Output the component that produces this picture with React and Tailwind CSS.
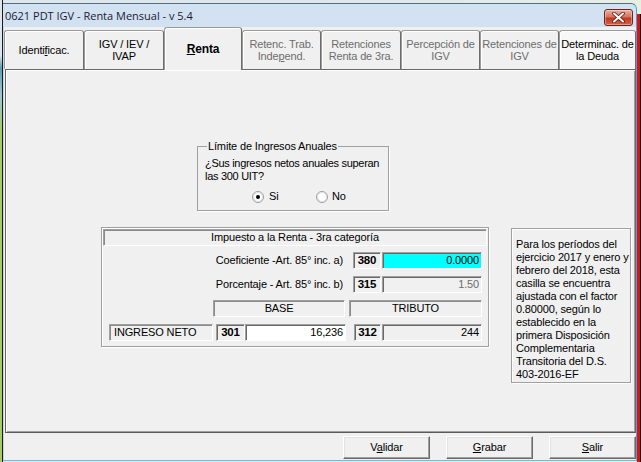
import React from "react";

const sunken =
  "border border-t-[#a0a0a0] border-l-[#a0a0a0] border-b-white border-r-white shadow-[inset_1px_1px_0_#696969]";
const sunkenLight =
  "border border-t-[#a0a0a0] border-l-[#a0a0a0] border-b-white border-r-white shadow-[inset_1px_1px_0_#8a8a8a]";

function Tab({ w, selected, disabled, light, children }) {
  const base =
    "flex items-center justify-center text-center rounded-t-[3px] border border-b-0 border-[#9a9a9a] border-r-[#6d6d6d] shadow-[inset_1px_1px_0_#ffffff]";
  if (selected) {
    return (
      <div
        className={`${base} relative z-10 h-[43px] -mb-[1px] bg-[#f0f0f0] font-bold text-[12px] text-black`}
        style={{ width: w }}
      >
        {children}
      </div>
    );
  }
  return (
    <div
      className={`${base} h-[39px] ${light ? "bg-[#f7f7f7]" : "bg-[#f0f0f0]"} ${
        disabled ? "text-[#6d6d6d]" : "text-black"
      }`}
      style={{ width: w }}
    >
      <div className="leading-[12px]">{children}</div>
    </div>
  );
}

function Radio({ checked }) {
  return (
    <svg width="12" height="12" viewBox="0 0 12 12">
      <circle cx="6" cy="6" r="5.5" fill="#ffffff" stroke="#9b9b9b" />
      <circle cx="6" cy="6" r="4.5" fill="none" stroke="#dcdcdc" />
      {checked && <circle cx="6" cy="6" r="2" fill="#000000" />}
    </svg>
  );
}

function Btn({ children }) {
  return (
    <div className="w-[87px] h-[23px] flex items-center justify-center bg-[#f0f0f0] border border-t-white border-l-white border-b-[#696969] border-r-[#696969] shadow-[inset_-1px_-1px_0_#a0a0a0,inset_1px_1px_0_#e3e3e3] text-black">
      <span>{children}</span>
    </div>
  );
}

export default function App() {
  return (
    <div className="w-[641px] h-[462px] overflow-hidden flex bg-[linear-gradient(to_right,#dfe7ec_0%,#dfe7ec_50%,#e7f0df_100%)] font-['Liberation_Sans',Arial,sans-serif] text-[11px] leading-[13px] tracking-[-0.15px] text-black">
      {/* left desktop strip */}
      <div className="w-[3px] h-full shrink-0 bg-[linear-gradient(to_bottom,#dde6ec_0px,#dde6ec_55px,#5d9fb2_68px,#a0c8cc_95px,#a7cb6b_130px,#a7cb6b_100%)] border-r border-[#1b1b1b]" />
      {/* window */}
      <div className="mt-[3px] w-[634px] h-[458px] shrink-0 flex flex-col border border-l-0 border-t-[#4f6f8d] border-r-[#3fa9db] border-b-[#5ac3e6] rounded-tr-[6px] bg-[linear-gradient(to_bottom,#d3e2f1,#b6cce6)] overflow-hidden">
        {/* title bar */}
        <div className="h-[23px] shrink-0 flex items-start justify-between">
          <div className="pl-[2px] leading-[23px] text-[11px] tracking-normal font-['Open_Sans',sans-serif] text-[#1a1a33]">
            0621 PDT IGV - Renta Mensual - v 5.4
          </div>
          <div className="mt-[5px] mr-[3px] w-[29px] h-[17px] rounded-[3px] border border-[#6e2418] bg-[linear-gradient(to_bottom,#eab0a2_0%,#d9735f_45%,#c0391f_55%,#d0644c_100%)] flex items-center justify-center shadow-[inset_0_0_0_1px_rgba(255,255,255,0.35)]">
            <svg width="13" height="11" viewBox="0 0 13 11">
              <path d="M2 1.5 L11 9.5 M11 1.5 L2 9.5" stroke="#5a1a10" strokeWidth="3.6" strokeLinecap="round" />
              <path d="M2 1.5 L11 9.5 M11 1.5 L2 9.5" stroke="#ffffff" strokeWidth="2" strokeLinecap="round" />
            </svg>
          </div>
        </div>
        {/* client */}
        <div className="flex-1 bg-[#f0f0f0] flex flex-col border-l border-[#c8d6e4]">
          {/* tabs */}
          <div className="flex items-end h-[42px] shrink-0">
            <Tab w={80}>
              Identi<span className="underline underline-offset-[1px]">f</span>icac.
            </Tab>
            <Tab w={80}>
              IGV / IEV /<br />IVAP
            </Tab>
            <Tab w={78} selected>
              <span>
                <span className="underline underline-offset-[1px]">R</span>enta
              </span>
            </Tab>
            <Tab w={79} disabled>
              Retenc. Trab.<br />Inde<span className="underline underline-offset-[1px]">p</span>end.
            </Tab>
            <Tab w={80} disabled>
              Retenciones<br />Renta de 3ra.
            </Tab>
            <Tab w={79} disabled>
              Percepción de<br />IGV
            </Tab>
            <Tab w={79} disabled>
              Retenciones de<br />IGV
            </Tab>
            <Tab w={77} light>
              Determinac. de<br />la Deuda
            </Tab>
          </div>
          {/* panel */}
          <div className="ml-[1px] w-[631px] h-[364px] shrink-0 border border-[#696969] border-b-[#5a5a5a] shadow-[inset_1px_1px_0_#ffffff,inset_-1px_-1px_0_#a0a0a0] bg-[#f0f0f0] flex flex-col">
            {/* group box */}
            <fieldset className="mt-[70px] ml-[191px] w-[192px] border border-[#a0a0a0] shadow-[1px_1px_0_#ffffff] pl-[7px] pr-[2px] pt-[4px] pb-[7px]">
              <legend className="ml-[2px] px-[1px] leading-[13px]">Límite de Ingresos Anuales</legend>
              <div className="leading-[13px] whitespace-nowrap tracking-[-0.3px]">
                ¿Sus ingresos netos anuales superan
                <br />
                las 300 UIT?
              </div>
              <div className="flex items-center mt-[7px] ml-[47px] h-[13px]">
                <div className="w-[64px] flex items-center gap-[5px]">
                  <Radio checked />
                  <span>Si</span>
                </div>
                <div className="flex items-center gap-[4px]">
                  <Radio />
                  <span>No</span>
                </div>
              </div>
            </fieldset>
            {/* lower row */}
            <div className="flex items-start mt-[16px]">
              <div className="ml-[95px] w-[388px] h-[120px] border border-[#a0a0a0] shadow-[inset_1px_1px_0_#ffffff,1px_1px_0_#ffffff] flex flex-col">
                <div className={`ml-[1px] mt-[1px] w-[384px] h-[17px] ${sunkenLight} flex items-center justify-center`}>
                  Impuesto a la Renta - 3ra categoría
                </div>
                {/* row 1 */}
                <div className="flex h-[17px] mt-[6px]">
                  <div className="w-[241px] flex items-center justify-end">Coeficiente -Art. 85° inc. a)</div>
                  <div className={`ml-[10px] w-[28px] ${sunken} flex items-center justify-center font-bold text-[11.5px]`}>380</div>
                  <div className={`ml-[1px] w-[100px] ${sunken} bg-[#00ffff] flex items-center justify-end pr-[2px]`}>0.0000</div>
                </div>
                {/* row 2 */}
                <div className="flex h-[17px] mt-[7px]">
                  <div className="w-[241px] flex items-center justify-end">Porcentaje - Art. 85° inc. b)</div>
                  <div className={`ml-[10px] w-[28px] ${sunken} flex items-center justify-center font-bold text-[11.5px]`}>315</div>
                  <div className={`ml-[1px] w-[100px] ${sunken} flex items-center justify-end pr-[2px] text-[#6d6d6d]`}>1.50</div>
                </div>
                {/* row 3 */}
                <div className="flex h-[17px] mt-[7px]">
                  <div className={`ml-[111px] w-[132px] ${sunkenLight} flex items-center justify-center`}>BASE</div>
                  <div className={`ml-[4px] w-[133px] ${sunkenLight} flex items-center justify-center`}>TRIBUTO</div>
                </div>
                {/* row 4 */}
                <div className="flex h-[17px] mt-[7px]">
                  <div className={`ml-[7px] w-[104px] ${sunkenLight} flex items-center pl-[4px]`}>INGRESO NETO</div>
                  <div className={`ml-[3px] w-[29px] ${sunken} flex items-center justify-center font-bold text-[11.5px]`}>301</div>
                  <div className={`w-[101px] ${sunken} bg-white flex items-center justify-end pr-[2px]`}>16,236</div>
                  <div className={`ml-[8px] w-[27px] ${sunken} flex items-center justify-center font-bold text-[11.5px]`}>312</div>
                  <div className={`ml-[1px] w-[100px] ${sunken} flex items-center justify-end pr-[2px]`}>244</div>
                </div>
              </div>
              <div className="ml-[22px] mt-[1px] w-[120px] h-[155px] border border-[#a0a0a0] shadow-[inset_1px_1px_0_#ffffff,1px_1px_0_#ffffff] pl-[4px] pt-[9px] whitespace-nowrap leading-[13px]">
                Para los períodos del
                <br />
                ejercicio 2017 y enero y
                <br />
                febrero del 2018, esta
                <br />
                casilla se encuentra
                <br />
                ajustada con el factor
                <br />
                0.80000, según lo
                <br />
                establecido en la
                <br />
                primera Disposición
                <br />
                Complementaria
                <br />
                Transitoria del D.S.
                <br />
                403-2016-EF
              </div>
            </div>
          </div>
          {/* buttons */}
          <div className="flex justify-end gap-[16px] mt-[3px] pr-[0px]">
            <Btn>
              V<span className="underline underline-offset-[1px]">a</span>lidar
            </Btn>
            <Btn>
              <span className="underline underline-offset-[1px]">G</span>rabar
            </Btn>
            <Btn>
              <span className="underline underline-offset-[1px]">S</span>alir
            </Btn>
          </div>
        </div>
      </div>
      {/* right strip */}
      <div className="flex-1 h-full flex flex-col">
        <div className="h-[14px] bg-[#e7f0df]" />
        <div className="flex-1 bg-[#e01010] border-r border-[#111]" />
      </div>
    </div>
  );
}
